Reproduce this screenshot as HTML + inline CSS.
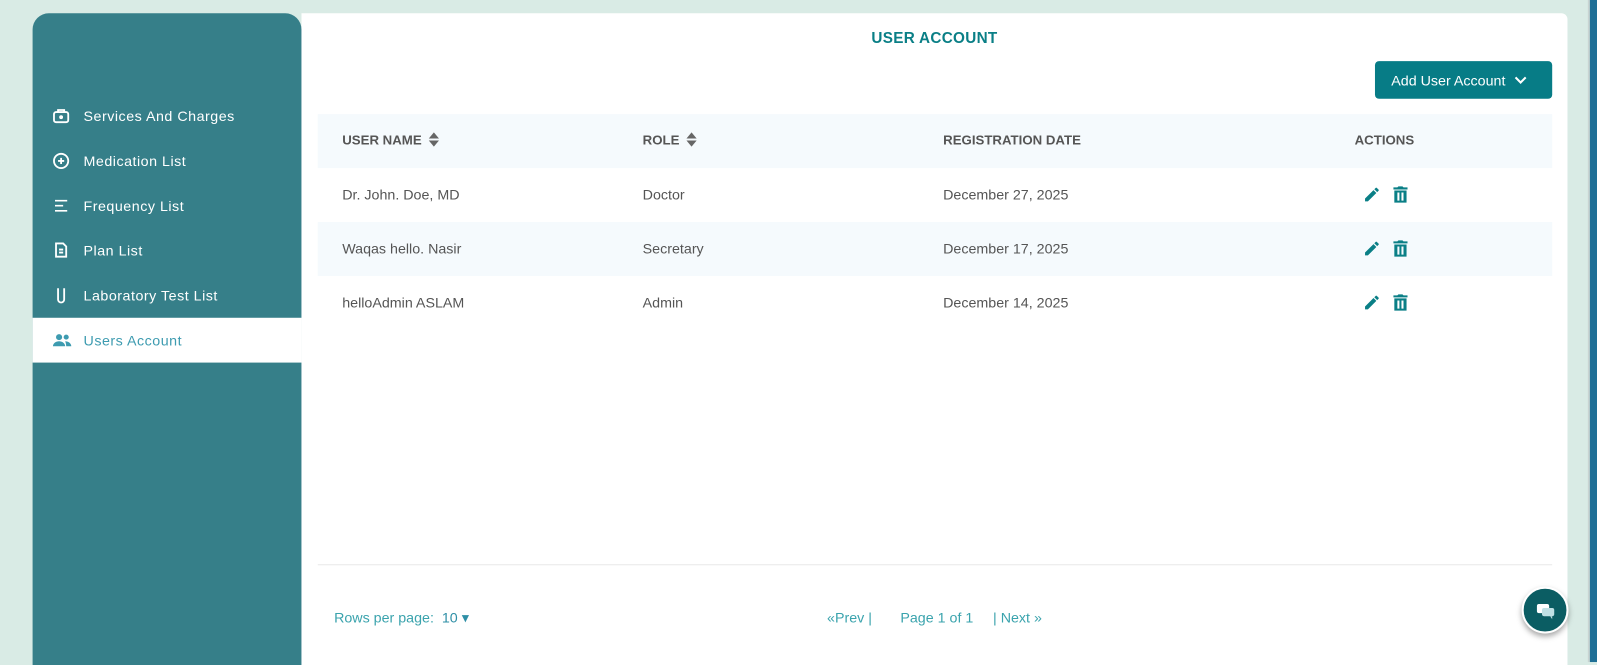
<!DOCTYPE html>
<html><head><meta charset="utf-8"><style>
*{margin:0;padding:0;box-sizing:border-box}
body{width:1597px;height:650px;overflow:hidden;background:#d9ebe5;font-family:"Liberation Sans",sans-serif;position:relative}
.wrap{position:absolute;left:0;top:0;width:1568px;height:640px;transform:scale(1.0185);transform-origin:0 0}
.side{position:absolute;left:32px;top:13px;width:264px;height:640px;background:#367f89;border-radius:16px 16px 0 0}
.item{position:absolute;left:0;width:264px;height:44px;color:#fff;font-size:14px;letter-spacing:0.5px;display:flex;align-items:center;padding-left:50px}
.item svg{position:absolute;left:19px;top:13px}
.item.act{background:#fff;color:#3d9bb0}
.main{position:absolute;left:296px;top:13px;width:1243px;height:640px;background:#fff;border-radius:0 6px 0 0}
.title{position:absolute;top:16px;width:100%;text-align:center;color:#0a7f86;font-weight:bold;font-size:15px;letter-spacing:0.3px}
.btn{position:absolute;left:1054px;top:47px;width:174px;height:37px;background:#077c86;border-radius:4px;color:#fff;font-size:14px;display:flex;align-items:center;padding-left:16px}
.row{position:absolute;left:16px;width:1212px;height:53px;font-size:14px;color:#555}
.row>span{position:absolute;top:18px}
.hd{background:#f5fafd;font-weight:bold;font-size:13px;color:#555}
.alt{background:#f5fafd}
.ic{position:absolute;top:17px}
.pg{position:absolute;top:585px;font-size:14px;color:#3aa3ad}
.srt{position:absolute;right:-18px;top:-1px}
</style></head><body>
<div class="wrap">
<div class="side">
<div class="item" style="top:79px"><svg width="18" height="18" viewBox="0 0 18 18" fill="none" stroke="#fff" stroke-width="1.8"><rect x="2" y="5" width="14" height="10" rx="2"/><path d="M6 5V3h6v2"/><circle cx="9" cy="10" r="1" fill="#fff"/></svg>Services And Charges</div>
<div class="item" style="top:123px"><svg width="18" height="18" viewBox="0 0 18 18" fill="none" stroke="#fff" stroke-width="1.8"><circle cx="9" cy="9" r="7"/><path d="M9 6v6M6 9h6"/></svg>Medication List</div>
<div class="item" style="top:167px"><svg width="18" height="18" viewBox="0 0 18 18" fill="none" stroke="#fff" stroke-width="1.6"><path d="M3 4h12M3 9h8M3 14h12"/></svg>Frequency List</div>
<div class="item" style="top:211px"><svg width="18" height="18" viewBox="0 0 18 18" fill="none" stroke="#fff" stroke-width="1.8"><path d="M4 2h7l3 3v10H4z"/><path d="M7 8h4M7 11h4"/></svg>Plan List</div>
<div class="item" style="top:255px"><svg width="18" height="18" viewBox="0 0 18 18" fill="none" stroke="#fff" stroke-width="1.8"><path d="M6 2v11a3 3 0 0 0 6 0V2"/></svg>Laboratory Test List</div>
<div class="item act" style="top:299px"><svg width="20" height="18" viewBox="0 0 20 18" fill="#3d9bb0"><circle cx="7" cy="6" r="3"/><circle cx="14" cy="6" r="2.5"/><path d="M1 15c0-3 3-5 6-5s6 2 6 5zM13 10c3 0 6 2 6 5h-5c0-2-0.5-3.5-1-5z"/></svg>Users Account</div>
</div>
<div class="main">
<div class="title">USER ACCOUNT</div>
<div class="btn">Add User Account <svg style="margin-left:9px" width="12" height="8" viewBox="0 0 12 8"><path d="M1 1l5 5 5-5" stroke="#fff" stroke-width="2" fill="none"/></svg></div>
<div class="row hd" style="top:99px"><span style="left:24px">USER NAME<svg class="srt" width="12" height="16" viewBox="0 0 12 16" fill="#666"><path d="M6 1l5 6H1zM6 15l5-6H1z"/></svg></span><span style="left:319px">ROLE<svg class="srt" width="12" height="16" viewBox="0 0 12 16" fill="#666"><path d="M6 1l5 6H1zM6 15l5-6H1z"/></svg></span><span style="left:614px">REGISTRATION DATE</span><span style="left:1018px">ACTIONS</span></div>
<div class="row" style="top:152px"><span style="left:24px">Dr. John. Doe, MD</span><span style="left:319px">Doctor</span><span style="left:614px">December 27, 2025</span>
<svg class="ic" style="left:1026px" width="18" height="18" viewBox="0 0 24 24" fill="#0a7f86"><path d="M3 17.25V21h3.75L17.81 9.94l-3.75-3.75L3 17.25zM20.71 7.04a1 1 0 0 0 0-1.41l-2.34-2.34a1 1 0 0 0-1.41 0l-1.83 1.83 3.75 3.75 1.83-1.83z"/></svg>
<svg class="ic" style="left:1056px" width="14" height="18" viewBox="0 0 14 18" fill="#0a7f86"><path d="M0 2h4l1-1h4l1 1h4v2H0zM1 5h12v12H1zM4 7v8h2V7zM8 7v8h2V7z" fill-rule="evenodd"/></svg></div>
<div class="row alt" style="top:205px"><span style="left:24px">Waqas hello. Nasir</span><span style="left:319px">Secretary</span><span style="left:614px">December 17, 2025</span>
<svg class="ic" style="left:1026px" width="18" height="18" viewBox="0 0 24 24" fill="#0a7f86"><path d="M3 17.25V21h3.75L17.81 9.94l-3.75-3.75L3 17.25zM20.71 7.04a1 1 0 0 0 0-1.41l-2.34-2.34a1 1 0 0 0-1.41 0l-1.83 1.83 3.75 3.75 1.83-1.83z"/></svg>
<svg class="ic" style="left:1056px" width="14" height="18" viewBox="0 0 14 18" fill="#0a7f86"><path d="M0 2h4l1-1h4l1 1h4v2H0zM1 5h12v12H1zM4 7v8h2V7zM8 7v8h2V7z" fill-rule="evenodd"/></svg></div>
<div class="row" style="top:258px"><span style="left:24px">helloAdmin ASLAM</span><span style="left:319px">Admin</span><span style="left:614px">December 14, 2025</span>
<svg class="ic" style="left:1026px" width="18" height="18" viewBox="0 0 24 24" fill="#0a7f86"><path d="M3 17.25V21h3.75L17.81 9.94l-3.75-3.75L3 17.25zM20.71 7.04a1 1 0 0 0 0-1.41l-2.34-2.34a1 1 0 0 0-1.41 0l-1.83 1.83 3.75 3.75 1.83-1.83z"/></svg>
<svg class="ic" style="left:1056px" width="14" height="18" viewBox="0 0 14 18" fill="#0a7f86"><path d="M0 2h4l1-1h4l1 1h4v2H0zM1 5h12v12H1zM4 7v8h2V7zM8 7v8h2V7z" fill-rule="evenodd"/></svg></div>
<div style="position:absolute;left:16px;top:541px;width:1212px;height:1px;background:#e8e8e8"></div>
<div class="pg" style="left:32px">Rows per page:&nbsp; <span style="color:#2e8fa6">10 &#9662;</span></div>
<div class="pg" style="left:516px">«Prev |</div>
<div class="pg" style="left:588px">Page 1 of 1</div>
<div class="pg" style="left:679px">| Next »</div>
</div>
<div style="position:absolute;left:1494px;top:576px;width:46px;height:46px;border-radius:50%;background:#0b5d63;border:2px solid #fff;box-shadow:0 3px 6px rgba(0,0,0,.35)"><svg style="position:absolute;left:12px;top:13px" width="20" height="18" viewBox="0 0 20 18"><rect x="1" y="2" width="12" height="9" rx="2" fill="#fff"/><rect x="6" y="6" width="12" height="8" rx="2" fill="#bfe0e4"/><path d="M14 14l2 3v-3z" fill="#bfe0e4"/></svg></div>
<div style="position:absolute;left:1559px;top:0;width:2px;height:650px;background:#c9d4d2"></div>
<div style="position:absolute;left:1561px;top:0;width:7px;height:650px;background:#1f6f96"></div>
</div>
</body></html>
